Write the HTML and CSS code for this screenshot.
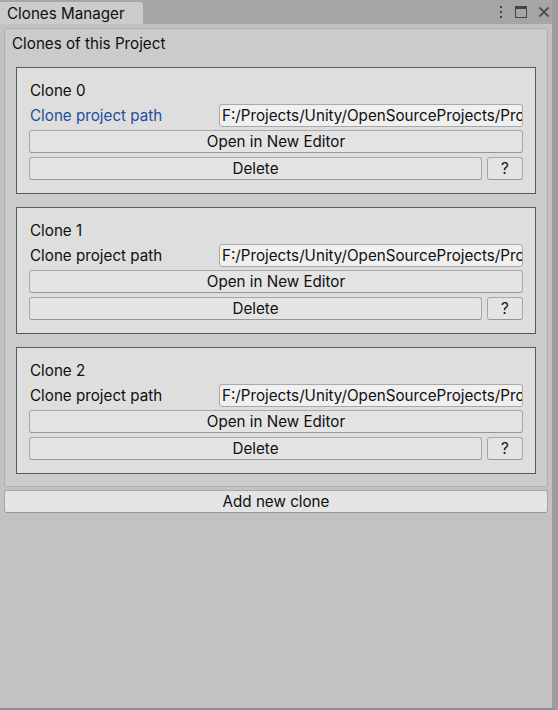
FILE: index.html
```html
<!DOCTYPE html>
<html>
<head>
<meta charset="utf-8">
<link rel="stylesheet" href="styles.css">
</head>
<body>
<div class="window">
  <div class="tabbar">
    <div class="tab">Clones Manager</div>
    <div class="tab-icons">
      <svg class="ico" width="6" height="14" viewBox="0 0 6 14"><rect x="2" y="1" width="2" height="2" fill="#444"/><rect x="2" y="6" width="2" height="2" fill="#444"/><rect x="2" y="11" width="2" height="2" fill="#444"/></svg>
      <svg class="ico" width="14" height="14" viewBox="0 0 14 14"><rect x="1.5" y="1.5" width="11" height="11" fill="none" stroke="#444" stroke-width="1"/><rect x="1" y="1" width="12" height="3" fill="#444"/></svg>
      <svg class="ico" width="12" height="12" viewBox="0 0 12 12"><path d="M1.5 1.5 L10.5 10.5 M10.5 1.5 L1.5 10.5" stroke="#555" stroke-width="2"/></svg>
    </div>
  </div>
  <div class="content">
    <div class="outer">
      <div class="outer-title">Clones of this Project</div>
      <div class="clone">
        <div class="clone-title">Clone 0</div>
        <div class="path-row">
          <span class="label focused">Clone project path</span>
          <div class="field">F:/Projects/Unity/OpenSourceProjects/Pro</div>
        </div>
        <div class="btn">Open in New Editor</div>
        <div class="del-row">
          <div class="btn grow">Delete</div>
          <div class="btn help">?</div>
        </div>
      </div>
      <div class="clone">
        <div class="clone-title">Clone 1</div>
        <div class="path-row">
          <span class="label">Clone project path</span>
          <div class="field">F:/Projects/Unity/OpenSourceProjects/Pro</div>
        </div>
        <div class="btn">Open in New Editor</div>
        <div class="del-row">
          <div class="btn grow">Delete</div>
          <div class="btn help">?</div>
        </div>
      </div>
      <div class="clone">
        <div class="clone-title">Clone 2</div>
        <div class="path-row">
          <span class="label">Clone project path</span>
          <div class="field">F:/Projects/Unity/OpenSourceProjects/Pro</div>
        </div>
        <div class="btn">Open in New Editor</div>
        <div class="del-row">
          <div class="btn grow">Delete</div>
          <div class="btn help">?</div>
        </div>
      </div>
    </div>
    <div class="btn add">Add new clone</div>
  </div>
</div>
</body>
</html>
```
FILE: styles.css
```css
* { box-sizing: border-box; }
html, body { margin: 0; padding: 0; }
body {
  width: 558px;
  height: 710px;
  overflow: hidden;
  font-family: Inter, "Noto Sans", sans-serif;
  font-size: 15.2px;
  color: #0f0f0f;
  background: #c2c2c2;
}
.window {
  width: 558px;
  height: 710px;
  display: flex;
  flex-direction: column;
  border-right: 6px solid #9c9c9c;
  border-bottom: 2px solid #8e8e8e;
}
.tabbar {
  height: 24px;
  flex: none;
  background: #a5a5a5;
  display: flex;
  align-items: flex-end;
  justify-content: space-between;
}
.tab {
  width: 143px;
  height: 22px;
  background: #cbcbcb;
  border-top-right-radius: 3px;
  padding-left: 7px;
  padding-top: 1px;
  line-height: 21px;
  white-space: nowrap;
}
.tab-icons {
  display: flex;
  align-items: center;
  gap: 10px;
  height: 24px;
  padding-right: 2px;
  align-self: flex-start;
}
.content {
  flex: 1;
  background: #c2c2c2;
  padding: 4px 0 0 4px;
}
.outer {
  width: 544px;
  background: #cbcbcb;
  border: 1px solid #adadad;
  border-radius: 3px;
  padding: 4px 11px 12px 11px;
  display: flex;
  flex-direction: column;
  gap: 13px;
}
.outer-title {
  line-height: 20px;
  padding-top: 1px;
  margin-left: -4px;
}
.clone {
  background: #dedede;
  border: 1px solid #585858;
  padding: 12px;
  display: flex;
  flex-direction: column;
  height: 127px;
}
.clone-title {
  line-height: 21px;
  padding-left: 1px;
}
.path-row {
  margin-top: 3px;
  display: flex;
  align-items: center;
  height: 23px;
}
.label {
  width: 190px;
  flex: none;
  padding-left: 1px;
  white-space: nowrap;
}
.label.focused { color: #1c4e9a; }
.field {
  flex: 1;
  min-width: 0;
  height: 23px;
  background: #f0f0f0;
  border: 1px solid #a9a9a9;
  border-radius: 3px;
  padding: 1px 2px 0;
  line-height: 20px;
  white-space: nowrap;
  overflow: hidden;
  text-overflow: clip;
}
.btn {
  height: 23px;
  background: #e4e4e4;
  border: 1px solid #a8a8a8;
  border-bottom-color: #959595;
  border-radius: 3px;
  text-align: center;
  padding-top: 1px;
  line-height: 20px;
}
.clone > .btn { margin-top: 3px; }
.del-row {
  margin-top: 4px;
  display: flex;
  gap: 5px;
}
.grow { flex: 1; }
.help { width: 36px; flex: none; }
.btn.add {
  width: 544px;
  margin-top: 3px;
}
```
